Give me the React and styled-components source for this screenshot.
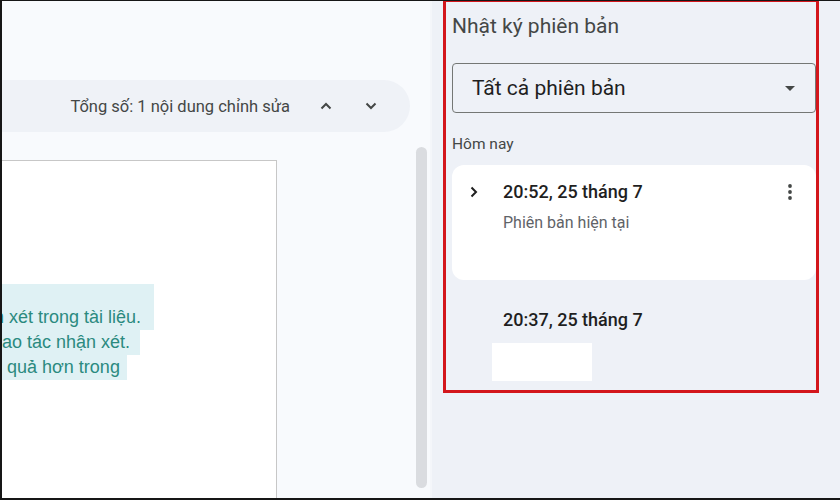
import React from 'react';
import styled, { createGlobalStyle } from 'styled-components';

const GlobalStyle = createGlobalStyle`
  html, body {
    margin: 0;
    padding: 0;
    background: #ffffff;
  }
  body {
    font-family: Roboto, "Liberation Sans", Arial, sans-serif;
  }
`;

const Frame = styled.div`
  position: relative;
  box-sizing: border-box;
  width: 840px;
  height: 500px;
  display: flex;
  overflow: hidden;
  border-left: 2px solid #161616;
  border-top: 1px solid #161616;
  border-bottom: 2px solid #161616;
  background: #f8fafd;
`;

const EditorArea = styled.div`
  width: 428px;
  display: flex;
  flex-direction: column;
  background: #f8fafd;
`;

const Toolbar = styled.div`
  flex-shrink: 0;
  margin-top: 79px;
  width: 408px;
  height: 52px;
  border-radius: 0 26px 26px 0;
  background: #eff2f7;
  display: flex;
  align-items: center;
  justify-content: flex-end;
  padding-right: 17px;
  box-sizing: border-box;
`;

const ChangeCount = styled.span`
  font-size: 16.5px;
  color: #444746;
  margin-right: 13px;
`;

const NavButton = styled.button`
  width: 45px;
  height: 36px;
  border: none;
  background: transparent;
  display: flex;
  align-items: center;
  justify-content: center;
  padding: 0;
  color: #444746;
`;

const Body = styled.div`
  flex: 1;
  min-height: 0;
  display: flex;
  align-items: flex-start;
  overflow: hidden;
`;

const Page = styled.div`
  flex-shrink: 0;
  margin-top: 28px;
  width: 275px;
  height: 360px;
  background: #ffffff;
  border-top: 1px solid #c7c7c7;
  border-right: 1px solid #c7c7c7;
  padding-top: 123px;
  box-sizing: border-box;
  overflow: hidden;
`;

const TextLine = styled.div`
  height: ${(p) => p.$h || 25}px;
  display: flex;
  align-items: center;
`;

const Highlight = styled.span`
  display: inline-block;
  box-sizing: border-box;
  height: 100%;
  width: ${(p) => p.$w}px;
  background: #dff1f4;
  color: #2b8a7f;
  font-family: "Liberation Sans", Arial, sans-serif;
  font-size: 18px;
  line-height: 25px;
  white-space: pre;
  overflow: hidden;
  padding-left: ${(p) => p.$indent || 0}px;
`;

const ScrollTrack = styled.div`
  flex: 1;
  display: flex;
  justify-content: flex-end;
  padding-right: 3px;
`;

const ScrollThumb = styled.div`
  margin-top: 15px;
  width: 11px;
  height: 341px;
  border-radius: 6px;
  background: #dadce0;
`;

const Panel = styled.div`
  flex: 1;
  display: flex;
  flex-direction: column;
  background: #eef1f7;
  border-left: 2px solid #f4f6fa;
  padding: 0 24px 0 20px;
`;

const PanelTitle = styled.h2`
  margin: 12px 0 0;
  font-size: 21px;
  font-weight: 400;
  color: #444746;
  line-height: 26px;
`;

const Select = styled.div`
  margin-top: 24px;
  height: 50px;
  box-sizing: border-box;
  border: 1px solid #747775;
  border-radius: 4px;
  display: flex;
  align-items: center;
  justify-content: space-between;
  padding: 0 20px 0 19px;
  font-size: 21px;
  color: #1f1f1f;
`;

const SectionLabel = styled.div`
  margin-top: 22px;
  font-size: 15.5px;
  color: #444746;
  line-height: 18px;
`;

const VersionCard = styled.div`
  margin-top: 12px;
  height: 115px;
  border-radius: 12px;
  background: ${(p) => (p.$current ? '#ffffff' : 'transparent')};
  display: flex;
  align-items: flex-start;
  padding: 16px 22px 0 18px;
  box-sizing: border-box;
`;

const Toggle = styled.div`
  width: 33px;
  height: 22px;
  display: flex;
  align-items: center;
  color: #1f1f1f;
`;

const VersionInfo = styled.div`
  flex: 1;
  display: flex;
  flex-direction: column;
`;

const VersionTime = styled.div`
  font-size: 18px;
  font-weight: 500;
  color: #1f1f1f;
  line-height: 22px;
`;

const VersionNote = styled.div`
  margin-top: 11px;
  font-size: 16px;
  color: #5f6368;
  line-height: 18px;
`;

const MoreButton = styled.div`
  width: 8px;
  height: 22px;
  display: flex;
  align-items: center;
  justify-content: center;
`;

const OlderVersion = styled.div`
  margin-top: 29px;
  padding-left: 51px;
`;

const Redacted = styled.div`
  margin: 12px 0 0 -11px;
  width: 100px;
  height: 38px;
  background: #ffffff;
`;

const Annotation = styled.div`
  position: absolute;
  left: 441px;
  top: -2px;
  width: 376px;
  height: 394px;
  border: 3px solid #d3161c;
  box-sizing: border-box;
  pointer-events: none;
`;

const Chevron = ({ dir }) => (
  <svg width="12" height="8" viewBox="0 0 12 8">
    <polyline
      points={dir === 'up' ? '1.5,6.5 6,2 10.5,6.5' : '1.5,1.5 6,6 10.5,1.5'}
      fill="none"
      stroke="#444746"
      strokeWidth="2"
    />
  </svg>
);

const lines = [
  { text: '', w: 152, h: 21 },
  { text: 'n xét trong tài liệu.', w: 152, shift: -8 },
  { text: 'ao tác nhận xét.', w: 138 },
  { text: ' quả hơn trong', w: 125 },
];

const App = () => {
  return (
    <>
      <GlobalStyle />
      <Frame>
        <EditorArea>
          <Toolbar>
            <ChangeCount>Tổng số: 1 nội dung chỉnh sửa</ChangeCount>
            <NavButton>
              <Chevron dir="up" />
            </NavButton>
            <NavButton>
              <Chevron dir="down" />
            </NavButton>
          </Toolbar>
          <Body>
            <Page>
              {lines.map((l, i) => (
                <TextLine key={i} $h={l.h}>
                  <Highlight
                    $w={l.w}
                    $indent={l.indent}
                    style={l.shift ? { textIndent: l.shift } : undefined}
                  >
                    {l.text}
                  </Highlight>
                </TextLine>
              ))}
            </Page>
            <ScrollTrack>
              <ScrollThumb />
            </ScrollTrack>
          </Body>
        </EditorArea>
        <Panel>
          <PanelTitle>Nhật ký phiên bản</PanelTitle>
          <Select>
            <span>Tất cả phiên bản</span>
            <svg width="10" height="5" viewBox="0 0 10 5">
              <path d="M0 0 L10 0 L5 5 Z" fill="#444746" />
            </svg>
          </Select>
          <SectionLabel>Hôm nay</SectionLabel>
          <VersionCard $current>
            <Toggle>
              <svg width="8" height="12" viewBox="0 0 8 12">
                <polyline points="1.5,1.5 6,6 1.5,10.5" fill="none" stroke="#1f1f1f" strokeWidth="2" />
              </svg>
            </Toggle>
            <VersionInfo>
              <VersionTime>20:52, 25 tháng 7</VersionTime>
              <VersionNote>Phiên bản hiện tại</VersionNote>
            </VersionInfo>
            <MoreButton>
              <svg width="4" height="16" viewBox="0 0 4 16">
                <circle cx="2" cy="2" r="1.9" fill="#444746" />
                <circle cx="2" cy="8" r="1.9" fill="#444746" />
                <circle cx="2" cy="14" r="1.9" fill="#444746" />
              </svg>
            </MoreButton>
          </VersionCard>
          <OlderVersion>
            <VersionTime>20:37, 25 tháng 7</VersionTime>
            <Redacted />
          </OlderVersion>
        </Panel>
        <Annotation />
      </Frame>
    </>
  );
};

export default App;
